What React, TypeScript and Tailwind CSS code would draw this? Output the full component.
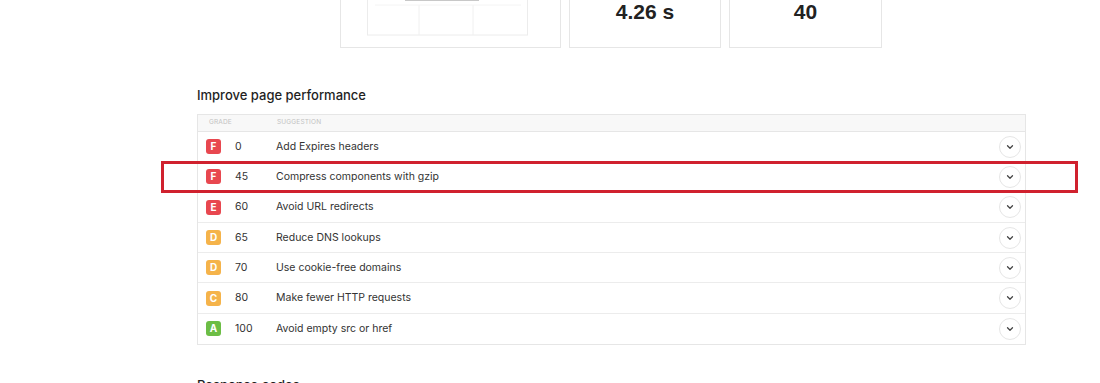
import { ChevronDown } from "lucide-react";

const rows = [
  { grade: "F", score: 0, text: "Add Expires headers", color: "bg-[#e8474f]" },
  { grade: "F", score: 45, text: "Compress components with gzip", color: "bg-[#e8474f]", hl: true },
  { grade: "E", score: 60, text: "Avoid URL redirects", color: "bg-[#e8474f]" },
  { grade: "D", score: 65, text: "Reduce DNS lookups", color: "bg-[#f5b34a]" },
  { grade: "D", score: 70, text: "Use cookie-free domains", color: "bg-[#f5b34a]" },
  { grade: "C", score: 80, text: "Make fewer HTTP requests", color: "bg-[#f5b34a]" },
  { grade: "A", score: 100, text: "Avoid empty src or href", color: "bg-[#6cbd45]" },
];

function Thumb() {
  return (
    <svg width="162" height="36" viewBox="0 0 162 36" className="mr-[6px]">
      <rect x="0.5" y="-2" width="160" height="37" fill="#fff" stroke="#ececec" />
      <line x1="38" y1="0" x2="112" y2="0" stroke="#c8c8c8" strokeWidth="2" />
      <line x1="52" y1="5" x2="52" y2="35" stroke="#f0f0f0" />
      <line x1="106" y1="5" x2="106" y2="35" stroke="#f0f0f0" />
      <line x1="8" y1="5" x2="154" y2="5" stroke="#f4f4f4" />
    </svg>
  );
}

export default function App() {
  return (
    <main
      className="w-[1100px] h-[383px] overflow-hidden bg-white text-[#222]"
      style={{ fontFamily: "Inter, 'Liberation Sans', sans-serif" }}
    >
      <section className="flex gap-2 pl-[340px] mt-[-60px]">
        <div className="w-[221px] h-[108px] border border-[#e6e6e6] flex flex-col items-center justify-end pb-[11px]">
          <Thumb />
        </div>
        <div className="w-[152px] h-[108px] border border-[#e6e6e6] flex flex-col items-center justify-end pb-[25px]">
          <p className="text-[21px] font-bold leading-none" style={{ fontFamily: "'Liberation Sans', Arial, sans-serif" }}>4.26 s</p>
        </div>
        <div className="w-[153px] h-[108px] border border-[#e6e6e6] flex flex-col items-center justify-end pb-[25px]">
          <p className="text-[21px] font-bold leading-none" style={{ fontFamily: "'Liberation Sans', Arial, sans-serif" }}>40</p>
        </div>
      </section>

      <section className="ml-[197px] w-[829px] mt-[39px]">
        <h2 className="text-[13px] leading-4 font-medium text-[#1f1f1f]">Improve page performance</h2>
        <div className="mt-[11px] border border-[#e6e6e6]">
          <div className="flex items-center h-[17px] bg-[#f8f8f8] border-b border-[#e6e6e6] text-[6.5px] tracking-wide text-[#c2c2c2] uppercase">
            <span className="w-[79px] pl-[11px]">Grade</span>
            <span>Suggestion</span>
          </div>
          {rows.map((r, i) => (
            <div
              key={i}
              className={`relative flex items-center h-[30.3px] text-[10.5px] text-[#333] ${i < rows.length - 1 ? "border-b border-[#ececec]" : ""}`}
            >
              {r.hl && (
                <div className="absolute left-[-37px] right-[-53px] top-[-1px] bottom-[-1px] border-[3px] border-[#d0212e]" />
              )}
              <span
                className={`ml-[8px] w-[15px] h-[15px] rounded-[3px] ${r.color} text-white text-[10px] font-bold flex items-center justify-center`}
              >
                {r.grade}
              </span>
              <span className="ml-[14px] w-[41px]">{r.score}</span>
              <span className="flex-1">{r.text}</span>
              <span className="mr-[4px] w-[22px] h-[22px] rounded-full border border-[#e6e6e6] flex items-center justify-center">
                <ChevronDown size={10} strokeWidth={3} className="text-[#444]" />
              </span>
            </div>
          ))}
        </div>
        <h2 className="mt-[32px] text-[13px] leading-4 font-medium text-[#1f1f1f]">Response codes</h2>
      </section>
    </main>
  );
}
